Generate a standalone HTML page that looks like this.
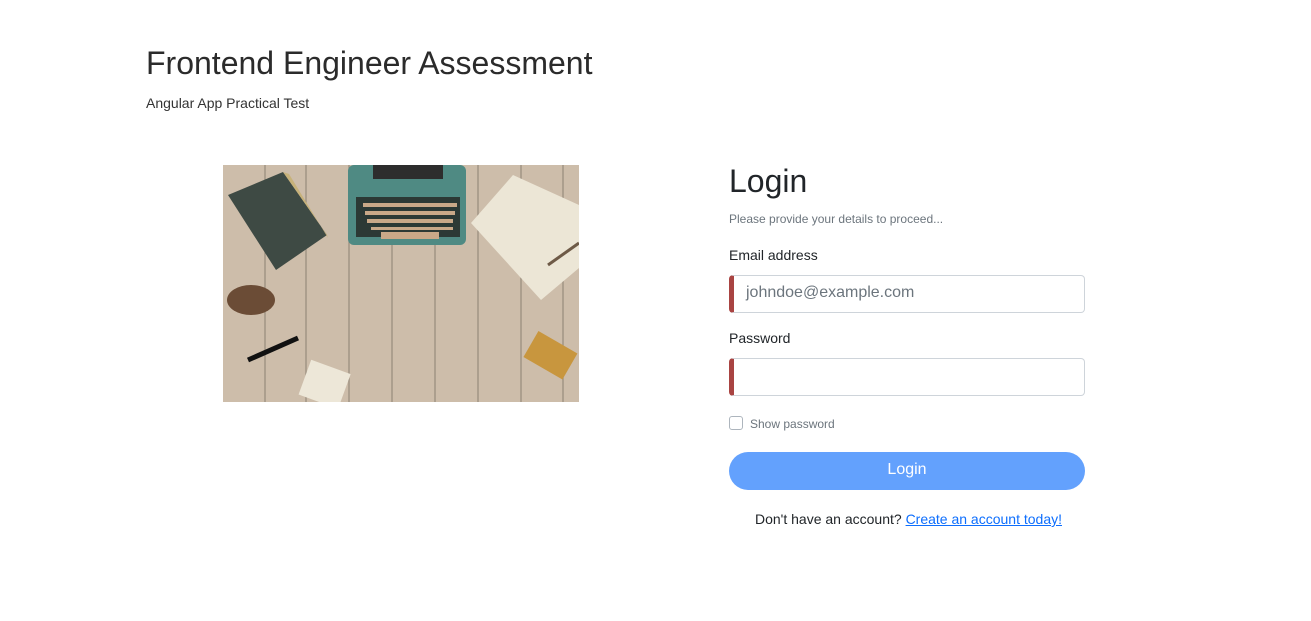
<!DOCTYPE html>
<html><head><meta charset="utf-8"><style>
*{box-sizing:border-box;margin:0;padding:0}
body{width:1311px;height:621px;background:#fff;font-family:"Liberation Sans",sans-serif;color:#212529;position:relative;overflow:hidden}
.a{position:absolute}
h1{position:absolute;left:146px;top:45px;font-size:32px;font-weight:400;color:#2b2b2b}
.sub{left:146px;top:95px;font-size:14px;color:#333}
.lt{left:729px;top:163px;font-size:32px;font-weight:400;color:#212529}
.pp{left:729px;top:212px;font-size:12px;color:#6c757d}
.lbl{font-size:14px;color:#212529}
.inp{left:729px;width:356px;height:38px;border:1px solid #ced4da;border-left:5px solid #a94442;border-radius:4px;font-size:16px;color:#6c757d;padding:8px 0 0 12px}
.cb{left:729px;top:416px;width:14px;height:14px;border:1px solid #adb5bd;border-radius:3px}
.btn{left:729px;top:452px;width:356px;height:38px;border-radius:19px;background:#63a1fd;color:#fff;font-size:16px;text-align:center;line-height:36px}
.foot{left:755px;top:511px;font-size:14px;color:#212529}
.foot a{color:#0d6efd}
</style></head><body>
<h1>Frontend Engineer Assessment</h1>
<div class="a sub">Angular App Practical Test</div>
<svg class="a" style="left:223px;top:165px" width="356" height="237" viewBox="0 0 356 237">
<rect width="356" height="237" fill="#c9b8a4"/>
<g stroke="#5b5248" stroke-width="1.2" opacity=".7">
<line x1="42" y1="0" x2="42" y2="237"/><line x1="83" y1="0" x2="83" y2="237"/><line x1="126" y1="0" x2="126" y2="237"/><line x1="169" y1="0" x2="169" y2="237"/><line x1="212" y1="0" x2="212" y2="237"/><line x1="255" y1="0" x2="255" y2="237"/><line x1="298" y1="0" x2="298" y2="237"/><line x1="340" y1="0" x2="340" y2="237"/></g>
<rect x="0" y="0" width="356" height="237" fill="#d8cbbb" opacity=".3"/>
<rect x="125" y="0" width="118" height="80" rx="6" fill="#4f8a83"/>
<rect x="150" y="0" width="70" height="14" fill="#2d2d2d"/>
<rect x="133" y="32" width="104" height="40" fill="#2c3935"/>
<rect x="158" y="67" width="58" height="7" fill="#c9a888"/>
<g fill="#c9a888"><rect x="140" y="38" width="94" height="4"/><rect x="142" y="46" width="90" height="4"/><rect x="144" y="54" width="86" height="4"/><rect x="148" y="62" width="82" height="3"/></g>
<polygon points="5,30 60,7 104,70 53,105" fill="#3e4a44"/>
<polygon points="60,7 66,9 105,73 104,70" fill="#c7b27a"/>
<polygon points="248,58 290,10 356,40 356,103 318,135" fill="#ece6d6"/>
<ellipse cx="28" cy="135" rx="24" ry="15" fill="#6b4c36"/>
<path d="M25 195 L75 173" stroke="#111" stroke-width="5" fill="none"/>
<rect x="82" y="200" width="42" height="37" fill="#ede7d8" transform="rotate(20 100 215)"/>
<rect x="305" y="175" width="45" height="30" fill="#c8963e" transform="rotate(30 327 190)"/>
<path d="M325 100 L356 78" stroke="#6e5a47" stroke-width="3"/>
</svg>
<div class="a lt">Login</div>
<div class="a pp">Please provide your details to proceed...</div>
<div class="a lbl" style="left:729px;top:247px">Email address</div>
<div class="a inp" style="top:275px">johndoe@example.com</div>
<div class="a lbl" style="left:729px;top:330px">Password</div>
<div class="a inp" style="top:358px"></div>
<div class="a cb"></div>
<div class="a" style="left:750px;top:417px;font-size:12px;color:#6c757d">Show password</div>
<div class="a btn">Login</div>
<div class="a foot">Don't have an account? <a href="#">Create an account today!</a></div>
</body></html>
